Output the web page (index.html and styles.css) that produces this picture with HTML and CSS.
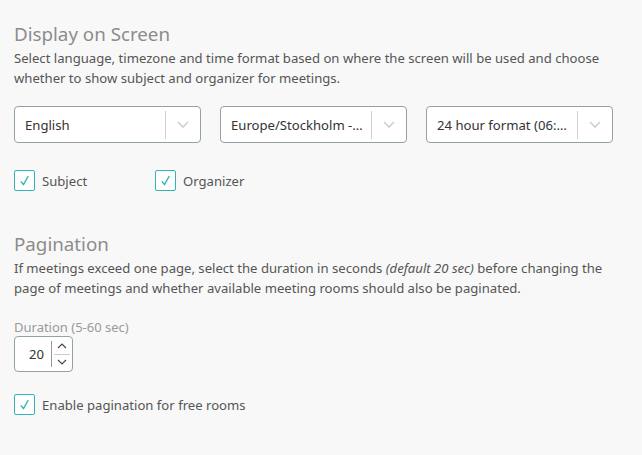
FILE: index.html
```html
<!DOCTYPE html>
<html lang="en">
<head>
    <meta charset="UTF-8">
    <meta name="viewport" content="width=device-width, initial-scale=1.0">
    <title>Display settings</title>
    <link rel="stylesheet" href="styles.css">
</head>
<body>
    <div class="settings">
        <section class="section">
            <h2>Display on Screen</h2>
            <p class="desc">Select language, timezone and time format based on where the screen will be used and choose whether to show subject and organizer for meetings.</p>

            <div class="selects">
                <div class="select">
                    <span class="select-value">English</span>
                    <span class="select-sep"></span>
                    <span class="select-arrow">
                        <svg width="12" height="7" viewBox="0 0 12 7"><path d="M1 1l5 5 5-5" fill="none" stroke="#cfcfcf" stroke-width="1.6"/></svg>
                    </span>
                </div>
                <div class="select">
                    <span class="select-value">Europe/Stockholm - GMT+01:00</span>
                    <span class="select-sep"></span>
                    <span class="select-arrow">
                        <svg width="12" height="7" viewBox="0 0 12 7"><path d="M1 1l5 5 5-5" fill="none" stroke="#cfcfcf" stroke-width="1.6"/></svg>
                    </span>
                </div>
                <div class="select">
                    <span class="select-value">24 hour format (06:00 - 18:00)</span>
                    <span class="select-sep"></span>
                    <span class="select-arrow">
                        <svg width="12" height="7" viewBox="0 0 12 7"><path d="M1 1l5 5 5-5" fill="none" stroke="#cfcfcf" stroke-width="1.6"/></svg>
                    </span>
                </div>
            </div>

            <div class="checks">
                <label class="check check-subject">
                    <span class="box">
                        <svg width="13" height="13" viewBox="0 0 13 13"><path d="M2.8 7.4l2.7 3.1L10.3 2" fill="none" stroke="#34b3b3" stroke-width="1.4"/></svg>
                    </span>
                    Subject
                </label>
                <label class="check">
                    <span class="box">
                        <svg width="13" height="13" viewBox="0 0 13 13"><path d="M2.8 7.4l2.7 3.1L10.3 2" fill="none" stroke="#34b3b3" stroke-width="1.4"/></svg>
                    </span>
                    Organizer
                </label>
            </div>
        </section>

        <section class="section pagination">
            <h2>Pagination</h2>
            <p class="desc">If meetings exceed one page, select the duration in seconds <em>(default 20 sec)</em> before changing the page of meetings and whether available meeting rooms should also be paginated.</p>

            <div class="field">
                <div class="field-label">Duration (5-60 sec)</div>
                <div class="spinner">
                    <span class="spinner-value">20</span>
                    <span class="spinner-btns">
                        <span class="spin">
                            <svg width="10" height="6" viewBox="0 0 10 6"><path d="M1 5l4-4 4 4" fill="none" stroke="#444" stroke-width="1.1"/></svg>
                        </span>
                        <span class="spin spin-down">
                            <svg width="10" height="6" viewBox="0 0 10 6"><path d="M1 1l4 4 4-4" fill="none" stroke="#444" stroke-width="1.1"/></svg>
                        </span>
                    </span>
                </div>
            </div>

            <div class="checks">
                <label class="check">
                    <span class="box">
                        <svg width="13" height="13" viewBox="0 0 13 13"><path d="M2.8 7.4l2.7 3.1L10.3 2" fill="none" stroke="#34b3b3" stroke-width="1.4"/></svg>
                    </span>
                    Enable pagination for free rooms
                </label>
            </div>
        </section>
    </div>
</body>
</html>
```

FILE: styles.css
```css
body {
    font-family: "Noto Sans", "Open Sans", sans-serif;
    background-color: #f8f8f8;
    color: #555;
    margin: 0;
    padding: 0;
}

.settings {
    padding: 20px 14px 0 14px;
}

h2 {
    font-size: 18.75px;
    font-weight: 400;
    line-height: 28px;
    color: #8c8c8c;
    margin: 0;
}

.desc {
    font-size: 13.125px;
    line-height: 20px;
    margin: 0;
    color: #555;
}

.desc em {
    font-style: italic;
}

.selects {
    display: flex;
    gap: 19px;
    margin-top: 18px;
}

.select {
    width: 187px;
    height: 37px;
    box-sizing: border-box;
    border: 1px solid #93a3a3;
    border-radius: 4px;
    background-color: #fff;
    display: flex;
    align-items: center;
}

.select-value {
    flex: 1;
    min-width: 0;
    padding-left: 10px;
    padding-right: 8px;
    font-size: 13.125px;
    color: #333;
    white-space: nowrap;
    overflow: hidden;
    text-overflow: ellipsis;
}

.select-sep {
    width: 1px;
    height: 28px;
    background-color: #d0d0d0;
}

.select-arrow {
    width: 34px;
    display: flex;
    justify-content: center;
    align-items: center;
}

.checks {
    display: flex;
    margin-top: 27px;
}

.check {
    display: flex;
    align-items: center;
    gap: 7px;
    font-size: 13.125px;
    color: #555;
    height: 21px;
}

.check-subject {
    width: 141px;
}

.box {
    width: 21px;
    height: 21px;
    box-sizing: border-box;
    border: 1.5px solid #34b3b3;
    border-radius: 2px;
    background-color: #fff;
    display: flex;
    justify-content: center;
    align-items: center;
}

.pagination {
    margin-top: 39px;
}

.field {
    margin-top: 20px;
}

.field-label {
    font-size: 13px;
    line-height: 18px;
    color: #9a9a9a;
}

.spinner {
    width: 59px;
    height: 36px;
    box-sizing: border-box;
    border: 1px solid #93a3a3;
    border-radius: 4px;
    background-color: #fff;
    display: flex;
}

.spinner-value {
    width: 37px;
    box-sizing: border-box;
    padding-right: 7px;
    text-align: right;
    font-size: 13.125px;
    color: #333;
    border-right: 1px solid #999;
    margin: 4px 0;
    line-height: 26px;
}

.spinner-btns {
    flex: 1;
    display: flex;
    flex-direction: column;
    padding: 2px;
}

.spin {
    flex: 1;
    display: flex;
    justify-content: center;
    align-items: center;
}

.spin-down {
    border-top: 1px solid #ccc;
}

.pagination .checks {
    margin-top: 22px;
}
```
